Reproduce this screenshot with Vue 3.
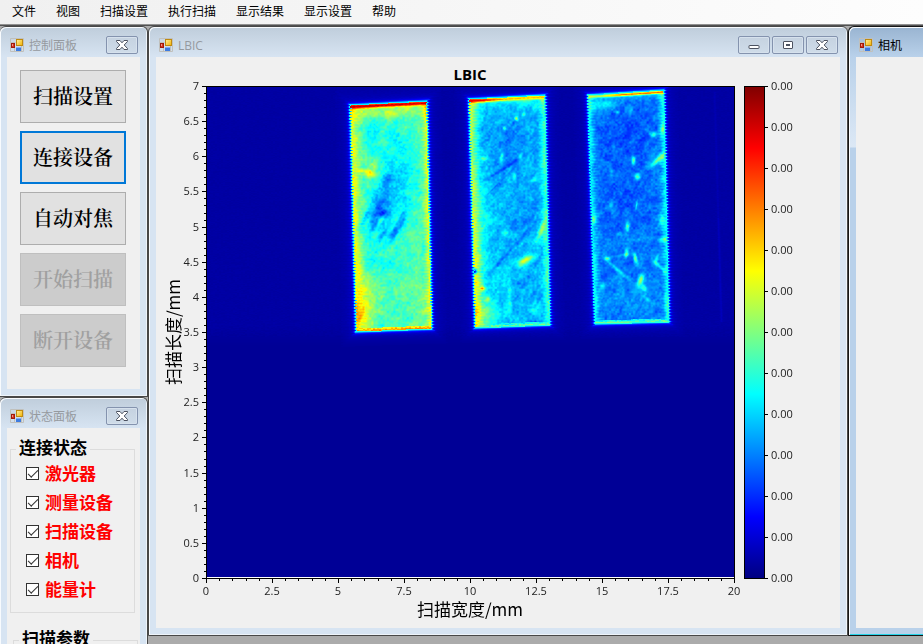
<script setup>
import { ref, onMounted } from 'vue'

const menus = ['文件', '视图', '扫描设置', '执行扫描', '显示结果', '显示设置', '帮助']
const actions = [
  { label: '扫描设置' },
  { label: '连接设备', focused: true },
  { label: '自动对焦' },
  { label: '开始扫描', disabled: true },
  { label: '断开设备', disabled: true }
]
const devices = ref([
  { id: 'laser', label: '激光器', on: true },
  { id: 'meter', label: '测量设备', on: true },
  { id: 'stage', label: '扫描设备', on: true },
  { id: 'camera', label: '相机', on: true },
  { id: 'energy', label: '能量计', on: true }
])

// Plot frame inside the chart's 684 x 571 drawing area
const L = 50, T = 29, R = 578, B = 521
const px = (mm) => Math.round(L + (mm / 20) * (R - L))
const py = (mm) => Math.round(B - (mm / 7) * (B - T))
const xTicks = Array.from({ length: 41 }, (_, i) => ({ v: i / 2, pos: px(i / 2), major: i % 5 === 0 }))
const yTicks = Array.from({ length: 71 }, (_, i) => ({ v: i / 10, pos: py(i / 10), major: i % 5 === 0 }))
const barTicks = Array.from({ length: 13 }, (_, i) => T + i * 41)

// Field size and the three samples: corners are x, y in field pixels
const W = 527, H = 490
const canvas = ref(null)
const samples = [
  {
    tl: [142, 17], tr: [220, 13], br: [225, 242], bl: [148, 245],
    base: 0.445, left: 0.17, leftW: 8, right: 0.17, rightW: 5, top: [0.95, 0.92], topW: 2, bottom: 0.72, noise: 0.065
  },
  {
    tl: [261, 11], tr: [338, 7], br: [343, 238], bl: [267, 241],
    base: 0.325, left: 0.25, leftW: 7, right: 0.13, rightW: 5, top: [0.88, 0.68], topW: 2, bottom: 0.46, noise: 0.06
  },
  {
    tl: [380, 7], tr: [457, 2], br: [462, 235], bl: [387, 237],
    base: 0.235, left: 0.14, leftW: 5, right: 0.15, rightW: 5, top: [0.56, 0.76], topW: 1.5, bottom: 0.46, noise: 0.055
  }
]
// x, y, radius x, radius y, angle in degrees, amplitude
const spots = [
  [183, 110, 20, 46, 20, -0.14], [170, 123, 4, 20, 30, -0.12], [178, 95, 5, 17, 20, -0.08],
  [177, 66, 7, 2, 10, 0], [192, 137, 4, 17, 28, -0.13], [167, 139, 5, 7, 20, -0.12],
  [177, 126, 6, 4, 0, -0.14], [159, 128, 3, 15, 28, -0.1], [186, 144, 5, 9, 20, -0.1],
  [175, 148, 3, 8, 30, -0.08], [180, 175, 22, 9, 0, -0.05], [165, 50, 8, 20, 0, -0.05],
  [185, 50, 24, 24, 0, -0.04],
  [188, 135, 2, 14, 28, 0.06], [172, 135, 2, 11, 32, 0.1],
  [163, 86, 7, 4, 12, 0.24], [154, 83, 7, 2, 0, 0.1], [167, 79, 3, 5, 0, 0.1],
  [158, 206, 9, 20, 0, 0.12], [155, 228, 12, 14, 0, 0.12], [175, 26, 38, 5, -3, 0.09],
  [152, 180, 5, 16, 0, 0.06], [213, 220, 10, 28, 0, 0.05],
  [298, 70, 24, 38, 0, -0.06], [305, 38, 22, 18, 0, -0.04], [323, 110, 14, 60, 0, -0.03],
  [296, 81, 2, 30, 58, -0.08], [286, 101, 1, 16, 45, -0.05], [300, 166, 2, 40, 42, -0.06],
  [310, 140, 15, 30, 35, -0.04], [315, 205, 18, 26, 20, -0.04],
  [309, 31, 2, 2, 0, 0.28], [297, 41, 2, 2, 0, 0.15], [294, 70, 2, 6, 8, 0.12],
  [277, 71, 4, 2, 0, 0.13], [307, 89, 2, 4, 0, 0.13], [325, 93, 5, 2, 0, 0.1],
  [318, 173, 9, 4, -30, 0.3], [334, 142, 3, 10, 22, 0.22], [298, 145, 5, 5, 0, 0.08],
  [275, 201, 3, 2, 0, 0.26], [280, 212, 3, 3, 0, 0.18], [271, 186, 8, 24, 0, 0.08],
  [274, 225, 12, 20, 0, 0.1], [285, 226, 25, 14, 0, 0.05], [302, 210, 2, 14, 0, 0.09],
  [326, 223, 4, 3, 0, 0.11], [267, 184, 3, 3, 0, -0.5], [328, 237, 7, 4, 0, -0.2],
  [273, 130, 10, 46, 0, 0.06], [316, 27, 2, 2, 0, 0.12], [313, 69, 2, 3, 0, 0.12],
  [395, 18, 16, 5, 0, 0.1], [420, 45, 26, 28, 0, -0.035], [424, 112, 22, 30, 0, -0.025],
  [410, 25, 2, 2, 0, 0.1], [423, 25, 2, 6, 15, 0.08], [426, 73, 2, 5, 0, 0.23],
  [430, 89, 3, 3, 30, 0.23], [451, 72, 3, 12, 48, 0.24], [446, 47, 4, 3, 0, 0.2],
  [455, 42, 3, 5, 0, 0.15], [429, 118, 1, 4, 10, 0.13], [420, 139, 2, 5, 0, 0.2],
  [419, 166, 2, 5, 10, 0.2], [428, 171, 2, 6, -12, 0.28], [400, 171, 3, 2, 0, 0.22],
  [412, 168, 12, 2, -10, 0.07], [411, 183, 2, 17, -50, 0.12], [432, 152, 18, 2, -8, 0.04],
  [433, 193, 3, 6, 15, 0.28], [437, 201, 4, 3, 50, 0.13], [449, 171, 2, 6, 20, 0.11],
  [452, 179, 2, 10, -48, 0.14], [456, 152, 5, 3, 0, 0.15], [395, 199, 3, 4, 0, 0.09],
  [454, 132, 3, 8, 0, 0.12], [439, 211, 2, 8, -40, 0.06], [386, 130, 4, 8, 0, 0.1],
  [462, 222, 3, 12, 0, 0.06], [406, 60, 2, 4, 0, 0.07], [404, 118, 2, 4, 0, 0.07],
  [425, 54, 2, 5, 30, 0.06], [404, 85, 2, 5, 0, 0.07], [412, 147, 3, 2, 0, 0.09],
  [425, 210, 40, 26, 0, 0.03]
].map(([x, y, rx, ry, deg, amp]) => {
  const a = (deg * Math.PI) / 180
  return { x, y, rx, ry, c: Math.cos(a), s: Math.sin(a), amp, reach: Math.max(rx, ry) * 2 }
})

function hash(x, y) {
  let h = Math.imul(x, 374761393) + Math.imul(y, 668265263)
  h = Math.imul(h ^ (h >>> 13), 1274126177)
  return ((h ^ (h >>> 16)) >>> 0) / 4294967295 - 0.5
}
function smooth(x, y) {
  const xi = Math.floor(x), yi = Math.floor(y)
  const fx = x - xi, fy = y - yi
  const u = fx * fx * (3 - 2 * fx), v = fy * fy * (3 - 2 * fy)
  const a = hash(xi, yi) * (1 - u) + hash(xi + 1, yi) * u
  const b = hash(xi, yi + 1) * (1 - u) + hash(xi + 1, yi + 1) * u
  return a * (1 - v) + b * v
}
const clamp = (n) => Math.max(0, Math.min(1, n))
const bell = (d, w) => Math.exp(-((d / w) ** 2))
const jet = (v) => [clamp(1.5 - Math.abs(4 * v - 3)), clamp(1.5 - Math.abs(4 * v - 2)), clamp(1.5 - Math.abs(4 * v - 1))]

function intensity(x, y) {
  let bg = 0.022 + 0.013 * clamp((258 - y) / 20)
  if (y < 250) bg += hash(x >> 1, y) * 0.007
  if (y > 4 && y < 235) bg += (y > 130 ? 0.022 : 0.012) * bell(x - (507 + y * 0.03), 1.2)
  let value = bg
  for (const s of samples) {
    const v = (y - s.tl[1]) / (s.bl[1] - s.tl[1])
    const wave = y % 3 === 0 ? 0.9 : -0.4
    const xl = s.tl[0] + (s.bl[0] - s.tl[0]) * v + wave
    const xr = s.tr[0] + (s.br[0] - s.tr[0]) * v + wave
    const u = (x - xl) / (xr - xl)
    const top = s.tl[1] + (s.tr[1] - s.tl[1]) * clamp(u)
    const bot = s.bl[1] + (s.br[1] - s.bl[1]) * clamp(u)
    const dl = x - xl, dr = xr - x, dt = y - top, db = bot - y
    const d = Math.min(dl, dr, dt, db)
    if (d < -14) continue
    if (d < 0) {
      value = Math.max(value, bg + 0.22 * Math.exp(d / 1.1) + 0.05 * Math.exp(d / 5))
      continue
    }
    let z = s.base
    z += smooth(x / 7, y / 7) * s.noise + smooth(x / 2.2 + 50, y / 2.2) * s.noise * 1.1 + hash(x >> 1, y >> 1) * 0.025
    z += smooth((x + y * 0.6) / 3, (y - x * 0.4) / 14) * s.noise * 0.6
    z += s.left * bell(dl, s.leftW) + s.right * bell(dr, s.rightW)
    for (const p of spots) {
      const dx = x - p.x, dy = y - p.y
      if (Math.abs(dx) > p.reach || Math.abs(dy) > p.reach) continue
      const q = ((dx * p.c + dy * p.s) / p.rx) ** 2 + ((dy * p.c - dx * p.s) / p.ry) ** 2
      z += p.amp * Math.exp(-q * 1.2)
    }
    z += 0.12 * Math.exp(-dt / 7)
    const rim = s.top[0] + (s.top[1] - s.top[0]) * clamp((u - 0.2) * 4) + hash(x >> 1, y) * 0.05
    const k = bell(dt - 2.5, s.topW)
    z = z * (1 - k) + rim * k
    if (dt < 1) z = 0.36
    if (db < 4) z = db < 1 ? 0.4 : Math.max(z, s.bottom - 0.08 * clamp(db - 2) + hash(x >> 1, y) * 0.1)
    if (dl < 1 || dr < 1) z = 0.37
    value = z
  }
  return value
}

onMounted(() => {
  const ctx = canvas.value.getContext('2d')
  const img = ctx.createImageData(W, H)
  for (let y = 0; y < H; y++) {
    for (let x = 0; x < W; x++) {
      const [r, g, b] = jet(intensity(x, y))
      const i = (y * W + x) * 4
      img.data[i] = r * 255
      img.data[i + 1] = g * 255
      img.data[i + 2] = b * 255
      img.data[i + 3] = 255
    }
  }
  ctx.putImageData(img, 0, 0)
})
</script>

<template>
  <div class="app">
    <svg class="defs" width="0" height="0" aria-hidden="true">
      <defs>
        <linearGradient id="gold" x1="0" y1="0" x2="1" y2="1">
          <stop offset="0" stop-color="#fff0a0" /><stop offset="1" stop-color="#f2b200" />
        </linearGradient>
        <symbol id="form-icon" viewBox="0 0 14 14">
          <path d="M.5 13.500v-13h13v13zM.5 4.500h5M4.500 10v3.500M11.500 8v5.500" fill="none" stroke="#c0c0bc" />
          <rect x="1.500" y="5.500" width="3" height="4" fill="#d8341f" stroke="#a01a0c" />
          <rect x="2" y="6" width="1" height="2" fill="#f49383" />
          <rect x="6.500" y="1.500" width="6" height="6" fill="url(#gold)" stroke="#c08a10" />
          <rect x="6" y="9" width="5" height="4" fill="#3d7be0" />
          <rect x="6" y="9" width="5" height="1" fill="#83aef4" />
        </symbol>
        <symbol id="close-icon" viewBox="0 0 12 10">
          <path d="M.5.5h3.500L6 2.800 8 .5h3.500v1L8.200 5l3.300 3.500v1H8L6 7.200 4 9.500H.5v-1L3.800 5 .5 1.500z" fill="#fff" stroke="#4c5260" />
        </symbol>
        <symbol id="min-icon" viewBox="0 0 12 10">
          <rect x="1" y="5.500" width="10" height="3" rx=".5" fill="#fff" stroke="#4c5260" />
        </symbol>
        <symbol id="max-icon" viewBox="0 0 12 10">
          <rect x="1.500" y="1.500" width="9" height="7" rx=".5" fill="#fff" stroke="#4c5260" />
          <rect x="4.500" y="4.500" width="3" height="1" fill="#d5e0ec" stroke="#4c5260" />
        </symbol>
      </defs>
    </svg>

    <nav class="menu">
      <button v-for="m in menus" :key="m" type="button">{{ m }}</button>
    </nav>

    <main class="desktop">
      <div class="side">
        <section class="window docked">
          <header class="title">
            <svg class="app-icon"><use href="#form-icon" /></svg>
            <h2>控制面板</h2>
            <button class="caption" type="button" aria-label="关闭"><svg><use href="#close-icon" /></svg></button>
          </header>
          <div class="body controls">
            <button
              v-for="a in actions"
              :key="a.label"
              type="button"
              class="action"
              :class="{ focused: a.focused }"
              :disabled="a.disabled"
            >{{ a.label }}</button>
          </div>
        </section>

        <section class="window docked grow">
          <header class="title">
            <svg class="app-icon"><use href="#form-icon" /></svg>
            <h2>状态面板</h2>
            <button class="caption" type="button" aria-label="关闭"><svg><use href="#close-icon" /></svg></button>
          </header>
          <div class="body status">
            <fieldset>
              <legend>连接状态</legend>
              <label v-for="d in devices" :key="d.id" :for="d.id">
                <input :id="d.id" v-model="d.on" type="checkbox" />
                <span>{{ d.label }}</span>
              </label>
            </fieldset>
            <fieldset class="params">
              <legend>扫描参数</legend>
            </fieldset>
          </div>
        </section>
      </div>

      <section class="window viewer">
        <header class="title">
          <svg class="app-icon"><use href="#form-icon" /></svg>
          <h2>LBIC</h2>
          <button class="caption" type="button" aria-label="最小化"><svg><use href="#min-icon" /></svg></button>
          <button class="caption" type="button" aria-label="最大化"><svg><use href="#max-icon" /></svg></button>
          <button class="caption" type="button" aria-label="关闭"><svg><use href="#close-icon" /></svg></button>
        </header>
        <div class="body">
          <svg class="chart" viewBox="0 0 684 571">
            <defs>
              <linearGradient id="jet" x1="0" y1="0" x2="0" y2="1">
                <stop offset="0" stop-color="#800000" />
                <stop offset=".125" stop-color="#f00" />
                <stop offset=".375" stop-color="#ff0" />
                <stop offset=".625" stop-color="#0ff" />
                <stop offset=".875" stop-color="#00f" />
                <stop offset="1" stop-color="#000080" />
              </linearGradient>
            </defs>
            <text class="chart-title" x="314" y="23">LBIC</text>
            <rect :x="L" :y="B - 1" :width="R - L" height="1" fill="#fff" />
            <foreignObject :x="L + 1" :y="T + 1" :width="W" :height="H">
              <canvas ref="canvas" class="field" :width="W" :height="H"></canvas>
            </foreignObject>
            <rect class="frame" :x="L + 0.5" :y="T + 0.5" :width="R - L" :height="B - T" />
            <g v-for="t in xTicks" :key="'x' + t.v">
              <rect :x="t.pos" :y="B + 1" width="1" :height="t.major ? 4 : 2" />
              <text v-if="t.major" class="num mid" :x="t.pos" y="538">{{ t.v }}</text>
            </g>
            <g v-for="t in yTicks" :key="'y' + t.v">
              <rect :x="L - (t.major ? 4 : 2)" :y="t.pos" :width="t.major ? 4 : 2" height="1" />
              <text v-if="t.major" class="num end" x="43" :y="t.pos + 4">{{ t.v }}</text>
            </g>
            <text class="axis" x="314" y="559">扫描宽度/mm</text>
            <text class="axis" transform="translate(24 275) rotate(-90)">扫描长度/mm</text>
            <rect class="bar" x="588.5" :y="T + 0.5" width="20" :height="B - T" />
            <g v-for="y in barTicks" :key="y">
              <rect x="609" :y="y" width="3" height="1" />
              <text class="num" x="615" :y="y + 4">0.00</text>
            </g>
          </svg>
        </div>
      </section>

      <section class="window active">
        <header class="title">
          <svg class="app-icon"><use href="#form-icon" /></svg>
          <h2>相机</h2>
        </header>
        <div class="body"></div>
      </section>
    </main>
  </div>
</template>

<style>
body {
  background: #ababab;
}
</style>

<style scoped>
.app {
  display: flex;
  flex-direction: column;
  height: 100vh;
  overflow: hidden;
  background: #ababab;
  font-family: "Open Sans", "Noto Sans CJK SC", sans-serif;
  font-size: 12px;
  color: #000;
}
.app *,
.app {
  box-sizing: border-box;
}
.defs {
  position: absolute;
}
button {
  font: inherit;
  padding: 0;
}
.menu {
  display: flex;
  flex: none;
  gap: 20px;
  height: 26px;
  padding: 0 12px;
  background: linear-gradient(90deg, #f0f0f0, #fdfdfd);
  border-bottom: 1px solid #505050;
  box-shadow: inset 0 -1px #909090;
}
.menu button {
  height: 24px;
  border: 0;
  background: none;
  line-height: 24px;
}
.desktop {
  flex: 1;
  min-height: 0;
  display: grid;
  grid-template-columns: 148px minmax(0, 1fr) 75px;
  grid-template-rows: minmax(0, 1fr);
}
.side {
  display: flex;
  flex-direction: column;
  min-height: 0;
}
.window {
  display: flex;
  flex-direction: column;
  min-height: 0;
  padding: 0 7px 7px;
  border: 1px solid #484848;
  border-radius: 6px 6px 0 0;
  background: linear-gradient(#bfcddb, #d7e4f2 30px);
  box-shadow: inset 1px 1px #f8fbfe, inset -1px -1px #eef4fa;
}
.docked {
  flex: none;
  border-left: 0;
}
.grow {
  flex: 1 0 auto;
}
.viewer,
.active {
  margin-bottom: 8px;
}
.active {
  padding-right: 0;
  border-right: 0;
  border-color: #161616;
  border-top-right-radius: 0;
  background: linear-gradient(#99b4d1, #b9d1ea 30px, #dce8f5 120px, #b9d1ea 121px);
  box-shadow: inset 1px 1px #f8fbfe, inset 0 -1px #25d3e8;
}
.title {
  display: flex;
  align-items: center;
  flex: none;
  gap: 2px;
  height: 30px;
  padding: 6px 2px 0 3px;
}
.app-icon {
  flex: none;
  width: 14px;
  height: 14px;
}
.title h2 {
  flex: 1;
  margin: 0;
  padding: 2px 0 0 3px;
  font-size: 12px;
  font-weight: 400;
  line-height: 18px;
  white-space: nowrap;
  color: #969a9f;
}
.active .title h2 {
  color: #000;
}
.caption {
  display: flex;
  align-items: center;
  justify-content: center;
  width: 32px;
  height: 18px;
  border: 1px solid #8493ae;
  border-radius: 2px;
  background: linear-gradient(#c5d2e0, #cfdce9);
  box-shadow: inset 0 0 0 1px #d6e1ed;
}
.caption svg {
  width: 12px;
  height: 10px;
}
.body {
  flex: 1;
  min-height: 0;
  background: #f0f0f0;
}
.controls {
  display: flex;
  flex-direction: column;
  gap: 8px;
  padding: 13px 14px 22px 13px;
}
.action {
  height: 53px;
  padding-bottom: 2px;
  border: 1px solid #adadad;
  background: #e1e1e1;
  color: #000;
  font-family: "Noto Serif CJK SC", "Noto Sans CJK SC", serif;
  font-size: 20px;
  font-weight: 600;
  line-height: 24px;
}
.action.focused {
  border: 2px solid #0078d7;
}
.action:disabled {
  border-color: #bfbfbf;
  background: #ccc;
  color: #a0a0a0;
}
.status {
  padding: 11px 5px 0 3px;
}
fieldset {
  min-width: 0;
  margin: 0;
  padding: 0 0 8px 15px;
  border: 1px solid #dcdcdc;
  font-family: "Noto Sans CJK SC", sans-serif;
  font-size: 17px;
  font-weight: 700;
}
legend {
  margin-left: -10px;
  padding: 0 3px 4px;
  line-height: 16px;
}
label {
  display: flex;
  align-items: center;
  gap: 6px;
  height: 29px;
  color: #f00;
  line-height: 20px;
}
label span {
  padding-bottom: 2px;
}
label input {
  appearance: none;
  width: 13px;
  height: 13px;
  margin: 0;
  border: 1px solid #333;
  background: #fff;
  display: grid;
  place-items: center;
}
label input:checked::before {
  content: "";
  width: 9px;
  height: 4px;
  margin-bottom: 3px;
  border: solid #333;
  border-width: 0 0 1px 1px;
  transform: rotate(-45deg);
}
.params {
  margin: 17px -3px 0 3px;
}
.chart {
  display: block;
  width: 100%;
  height: 100%;
}
.field {
  display: block;
}
.frame {
  fill: none;
  stroke: #000;
}
.bar {
  fill: url(#jet);
  stroke: #000;
}
.num {
  font-size: 11px;
  fill: #222;
}
.mid {
  text-anchor: middle;
}
.end {
  text-anchor: end;
}
.chart-title {
  font-size: 15px;
  font-weight: 700;
  text-anchor: middle;
}
.axis {
  font-family: "Noto Sans CJK SC", sans-serif;
  font-size: 17px;
  text-anchor: middle;
}
</style>
